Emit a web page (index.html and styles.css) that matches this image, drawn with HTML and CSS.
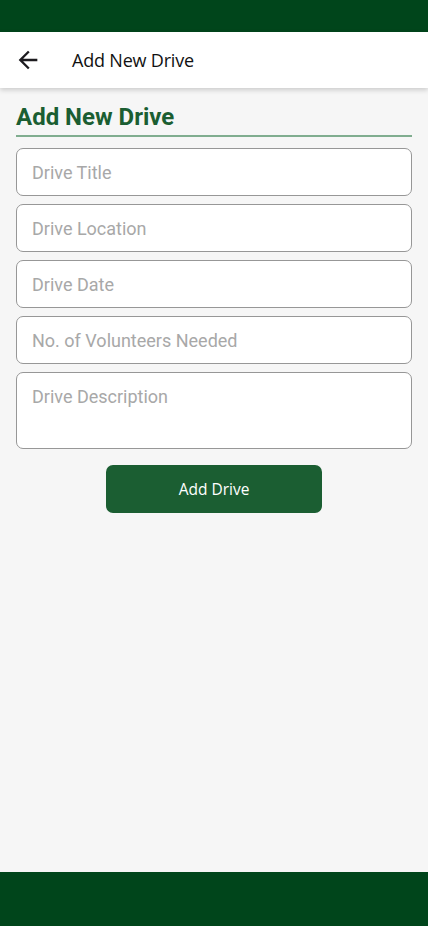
FILE: index.html
```html
<!DOCTYPE html>
<html>
<head>
<meta charset="utf-8">
<link rel="stylesheet" href="styles.css">
</head>
<body>
<div class="screen">
  <div class="status-bar"></div>
  <header class="app-bar">
    <svg class="back" width="28" height="28" viewBox="0 0 24 24"><path d="M20 11H7.83l5.59-5.59L12 4l-8 8 8 8 1.41-1.41L7.83 13H20v-2z" fill="#1c1b1f"/></svg>
    <span class="app-title">Add New Drive</span>
  </header>
  <main class="content">
    <h1 class="heading">Add New Drive</h1>
    <form class="form">
      <input class="field" type="text" placeholder="Drive Title">
      <input class="field" type="text" placeholder="Drive Location">
      <input class="field" type="text" placeholder="Drive Date">
      <input class="field" type="text" placeholder="No. of Volunteers Needed">
      <textarea class="field area" placeholder="Drive Description"></textarea>
      <button class="submit" type="button">Add Drive</button>
    </form>
  </main>
  <div class="bottom-bar"></div>
</div>
</body>
</html>
```

FILE: styles.css
```css
* { box-sizing: border-box; }
html, body { margin: 0; padding: 0; }
body { background: #f6f6f6; font-family: Roboto, "Noto Sans", sans-serif; }
.screen { display: flex; flex-direction: column; height: 926px; }
.status-bar { height: 32px; background: #00451b; flex: none; }
.app-bar {
  height: 56px; background: #fff; flex: none;
  display: flex; align-items: center; padding-left: 14px;
  box-shadow: 0 2px 5px rgba(0,0,0,0.18);
  position: relative; z-index: 1;
}
.back { display: block; }
.app-title {
  margin-left: 30px; font-family: "Open Sans", sans-serif; font-size: 18px;
  color: #111; letter-spacing: -0.2px;
}
.content { flex: 1; padding: 14px 16px 0; }
.heading {
  margin: 0; font-family: Roboto, sans-serif; font-weight: 700; font-size: 24px;
  color: #1b5e32; line-height: 30px; padding-bottom: 3px;
  border-bottom: 2px solid #80ad8f;
}
.form { display: flex; flex-direction: column; gap: 8px; margin-top: 11px; }
.field {
  display: block; width: 100%; height: 48px; margin: 0;
  border: 1px solid #979797; border-radius: 7px; background: #fff;
  padding: 0 15px; font-family: Roboto, sans-serif; font-size: 18px; color: #222;
  outline: none;
}
.field::placeholder { color: #a8a8a8; }
.area { height: 77px; resize: none; padding-top: 12px; line-height: 24px; }
.submit {
  align-self: center; margin-top: 8px; width: 216px; height: 48px;
  border: none; border-radius: 7px; background: #1b5e32; color: #fff;
  font-family: "Open Sans", sans-serif; font-size: 15.5px;
}
.bottom-bar { height: 54px; background: #00451b; flex: none; }
```
